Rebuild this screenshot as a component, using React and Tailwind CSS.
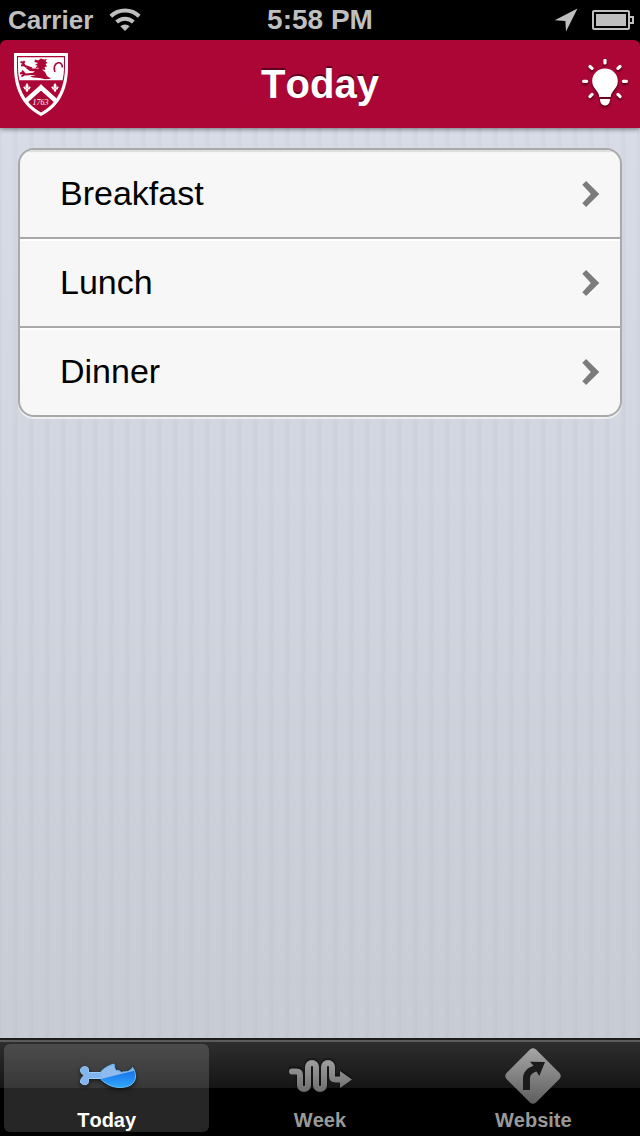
import React from "react";

function WifiIcon() {
  return (
    <svg viewBox="0 0 32 24" className="h-6 w-8" fill="none" stroke="#bfbfbf" strokeWidth="4" aria-hidden="true">
      <path d="M1.8 8.200A20.5 20.500 0 0 1 30.200 8.200" />
      <path d="M7.600 14A12.300 12.300 0 0 1 24.400 14" />
      <path d="M16 23 11.300 18.200A7 7 0 0 1 20.700 18.200Z" fill="#bfbfbf" stroke="none" />
    </svg>
  );
}

function LocationIcon() {
  return (
    <svg viewBox="0 0 24 24" className="h-6 w-6" fill="#bfbfbf" aria-hidden="true">
      <path d="M23.500 0.500 12 23.500 11.400 13 .7 12.200Z" />
    </svg>
  );
}

function BatteryIcon() {
  return (
    <svg viewBox="0 0 42 20" className="h-5 w-[42px]" aria-hidden="true">
      <rect x="1" y="1" width="36" height="18" rx="1" fill="none" stroke="#bfbfbf" strokeWidth="2" />
      <rect x="4" y="4" width="30" height="12" fill="#bfbfbf" />
      <path d="M38 7h3v6h-3" fill="none" stroke="#bfbfbf" strokeWidth="2" />
    </svg>
  );
}

function Lily({ transform }) {
  return (
    <g transform={transform} fill="#fff">
      <path d="M0 -4.500C2 -2.500 1.700 -1 1 0.500H-1C-1.700 -1 -2 -2.500 0 -4.500Z" />
      <path d="M-1 1.500C-1 -1.500 -3.500 -2 -4 0.500C-3 0 -2.600 0.500 -2.800 1.500ZM1 1.500C1 -1.500 3.500 -2 4 0.500C3 0 2.600 0.500 2.800 1.500Z" />
      <path d="M-2.500 0.800H2.500V2H1L1.300 3.600 0 4.500 -1.300 3.600 -1 2H-2.500Z" />
    </g>
  );
}

function Crest() {
  return (
    <svg viewBox="0 0 54 63" className="h-[63px] w-[54px]" aria-hidden="true">
      <path d="M0 0H54V14C54 34 47 53 27 63C7 53 0 34 0 14Z" fill="#fff" />
      <path d="M3 3H51V14C51 32 44.500 50 27 59.500C9.500 50 3 32 3 14Z" fill="#ab0635" />
      <path d="M4 4.200H50V14C50 19 49.500 23 48.600 27.200H5.400C4.500 23 4 19 4 14Z" fill="#fff" />
      <g fill="none" stroke="#ab0635" strokeLinejoin="round">
        <path d="M18 15.500 11 13 8.500 9.500 6.500 9M10.500 12 7 12.500M9.500 10 10.500 8" strokeWidth="1.900" />
        <path d="M22 20.500 12 21.500 8 20 6 20.500M11 21 7.500 23.500M10.500 20.500 8 17.500" strokeWidth="1.900" />
        <path d="M41 19C39.500 15.500 40 11 44 9.800C47 9.500 48.500 11.500 48.300 14.500M41 15 39.700 16.500" strokeWidth="1.600" />
      </g>
      <g fill="#ab0635">
        <path d="M21 6.500 24 7.500 27 5.500 30 6.500 33 6 31.500 8 33.500 10 31.500 11 33 13.500 30.500 14 31.500 17 28.500 16.500 26.500 17.500 24 14.500 21 15.500 23.500 12.500 21 12 24 10 20.500 9Z" />
        <path d="M11 14.500 19 15.500 27 15.500 31 19 33 23 37 25.800 31 26.300 26 25 19 24.500 16 23 22 22.500 17 21.500 21 18.500 16 18Z" />
      </g>
      <path d="M27 34.500 12.500 47.500M27 34.500 41.500 47.500" fill="none" stroke="#fff" strokeWidth="4.500" strokeLinecap="square" />
      <Lily transform="translate(13 34.500)" />
      <Lily transform="translate(41 34.500)" />
      <text x="26.500" y="52" textAnchor="middle" fill="#fff" className="font-['Liberation_Serif',serif] text-[8px] italic">1763</text>
    </svg>
  );
}

function BulbIcon() {
  return (
    <svg viewBox="0 0 46 50" className="h-[50px] w-[46px] drop-shadow-[0_2px_1px_rgba(50,0,15,0.7)]" fill="#fff" aria-hidden="true">
      <path d="M23 9.500C15.800 9.500 10.200 15 10.200 22C10.200 30 17 31.500 17.300 38H28.700C29 31.500 35.800 30 35.800 22C35.800 15 30.200 9.500 23 9.500Z" />
      <path d="M18 40H28C28 44.500 25.500 46.500 23 46.500S18 44.500 18 40Z" />
      <path d="M23 1.200V4M1.600 22.300H4.600M41.400 22.300H44.400M8 7.500 10 9.400M38 7.500 36 9.400M8 37.500 10 35.400M38 37.500 36 35.400" stroke="#fff" strokeWidth="3.200" strokeLinecap="round" />
    </svg>
  );
}

function Chevron() {
  return (
    <svg viewBox="0 0 18 26" className="h-[26px] w-[18px]" fill="#7c7c7c" aria-hidden="true">
      <path d="M0.300 3.800 4.100 0 17.300 13 4.100 26 0.300 22.200 8.800 13Z" />
    </svg>
  );
}

const meatPath =
  "M24 9.500C27 6.500 31 3.500 37 2C37.300 5 38 8 40 9C41.500 8 43 9 44.500 10.800C46 9.300 48 10.300 49 9.700C51 9.800 52 9 53 8C54 8 55 7 55.500 5.500C57.500 8 58.500 11 58.500 15C58 22 52 25.500 43 25.500C35 25.500 29 22 24 17.500Z";

function DrumstickIcon() {
  return (
    <svg viewBox="0 0 60 28" className="h-7 w-[60px] drop-shadow-[0_2px_2px_rgba(0,0,0,0.6)]" aria-hidden="true">
      <defs>
        <linearGradient id="meat" x1="0" y1="0" x2="0" y2="1">
          <stop offset="0.300" stopColor="#1670e8" />
          <stop offset="1" stopColor="#35b0ff" />
        </linearGradient>
        <clipPath id="meatClip">
          <path d={meatPath} />
        </clipPath>
      </defs>
      <path d="M3.500 8C3.500 4 11.500 3.300 11.500 7.500V10.500H24V16.500H11.500V19.500C11.500 24 4.500 23.500 3.500 20C3.500 17 5 15.500 7 13.500C5 12 3.500 10.500 3.500 8Z" fill="#82b5ed" stroke="#9bcdfb" />
      <g clipPath="url(#meatClip)">
        <path d="M20 0H60V28H20Z" fill="url(#meat)" />
        <path d="M20 0H60V8L20 18Z" fill="#90b9ed" />
      </g>
      <path d={meatPath} fill="none" stroke="#68bafa" />
    </svg>
  );
}

function WeekIcon() {
  return (
    <svg viewBox="0 0 64 34" className="h-[34px] w-16 drop-shadow-[0_-1px_1px_rgba(0,0,0,0.8)]" aria-hidden="true">
      <defs>
        <linearGradient id="weekFill" gradientUnits="userSpaceOnUse" x1="0" y1="0" x2="0" y2="34">
          <stop stopColor="#a0a0a0" />
          <stop offset="1" stopColor="#6c6c6c" />
        </linearGradient>
      </defs>
      <path d="M4 12.500H8.500Q12 12.500 12 16V26A4 4 0 0 0 20 26V8A4 4 0 0 1 28 8V26A4 4 0 0 0 36 26V8A4 4 0 0 1 44 8V17Q44 20.500 47.500 20.500H53" fill="none" stroke="url(#weekFill)" strokeWidth="6" strokeLinecap="round" />
      <path d="M52 12 64 20.500 52 29Z" fill="url(#weekFill)" />
    </svg>
  );
}

function WebsiteIcon() {
  return (
    <svg viewBox="0 0 56 56" className="size-14" aria-hidden="true">
      <defs>
        <linearGradient id="signFill" gradientUnits="userSpaceOnUse" x1="0" y1="0" x2="0" y2="56">
          <stop stopColor="#a6a6a6" />
          <stop offset="1" stopColor="#5d5d5d" />
        </linearGradient>
      </defs>
      <path d="M25 1.500Q28-1 31 1.500L54.500 25Q57 28 54.500 31L31 54.500Q28 57 25 54.500L1.500 31Q-1 28 1.500 25Z" fill="url(#signFill)" />
      <path d="M18 42V31C18 24 22 20 28.500 17.700L25 13.800 40 14 34.300 28 31.500 23.500C27 25 25 27 25 31V42Z" fill="#1b1b1b" />
    </svg>
  );
}

const meals = ["Breakfast", "Lunch", "Dinner"];

const tabs = [
  { label: "Today", Icon: DrumstickIcon, active: true },
  { label: "Week", Icon: WeekIcon, active: false },
  { label: "Website", Icon: WebsiteIcon, active: false },
];

export default function App() {
  return (
    <div className="flex min-h-screen flex-col bg-black font-['Liberation_Sans',Arial,sans-serif] [font-kerning:none]">
      <div className="grid h-10 grid-cols-[1fr_auto_1fr] items-center px-1.5 text-[26px] leading-8 font-bold text-[#bfbfbf]">
        <div className="flex items-center gap-4 pl-0.5">
          <span>Carrier</span>
          <WifiIcon />
        </div>
        <span className="text-[28px] leading-8">5:58 PM</span>
        <div className="flex items-center justify-end gap-3.5">
          <LocationIcon />
          <BatteryIcon />
        </div>
      </div>

      <header className="relative z-10 grid h-[88px] grid-cols-[1fr_auto_1fr] items-center rounded-t-md bg-[#ab0635] px-3 shadow-[0_1px_5px_rgba(0,0,0,0.5)]">
        <div className="pl-0.5">
          <Crest />
        </div>
        <h1 className="text-[40px] font-bold text-white [text-shadow:0_-2px_0_rgba(60,0,20,0.7)]">Today</h1>
        <button type="button" aria-label="Tips" className="justify-self-end">
          <BulbIcon />
        </button>
      </header>

      <main className="flex-1 bg-[repeating-linear-gradient(90deg,rgba(90,110,150,0.04)_0px_2px,transparent_2px_13px,rgba(90,110,150,0.04)_13px_16px),linear-gradient(#d8dce6,#c8ccd5)] px-[18px] py-5">
        <ul className="overflow-hidden rounded-2xl border-2 border-[#a9a9a9] bg-[#f7f7f7] shadow-[0_2px_0_rgba(255,255,255,0.6)]">
          {meals.map((meal) => (
            <li key={meal} className="group border-b-2 border-[#a9a9a9] last:border-b-0">
              <a
                href={"#" + meal.toLowerCase()}
                className="flex h-[87px] items-center justify-between pr-5 pl-10 text-[34px] text-black shadow-[inset_0_2px_0_#ffffff] group-first:shadow-[inset_0_2px_1px_#dcdcdc]"
              >
                {meal}
                <Chevron />
              </a>
            </li>
          ))}
        </ul>
      </main>

      <nav className="grid h-[98px] grid-cols-3 gap-2 border-t-2 border-[#1d1d1d] bg-[linear-gradient(#5b5b5b_0_2px,#2e2e2e_2px,#151515_48px,#000_48px)] px-1 pt-1 pb-1">
        {tabs.map(({ label, Icon, active }) => (
          <button
            key={label}
            type="button"
            aria-current={active ? "page" : undefined}
            className={
              active
                ? "flex flex-col items-center rounded-md bg-white/15 text-white"
                : "flex flex-col items-center rounded-md text-[#999999]"
            }
          >
            <span className="flex h-16 items-center">
              <Icon />
            </span>
            <span className="text-[20px] leading-6 font-bold">{label}</span>
          </button>
        ))}
      </nav>
    </div>
  );
}
